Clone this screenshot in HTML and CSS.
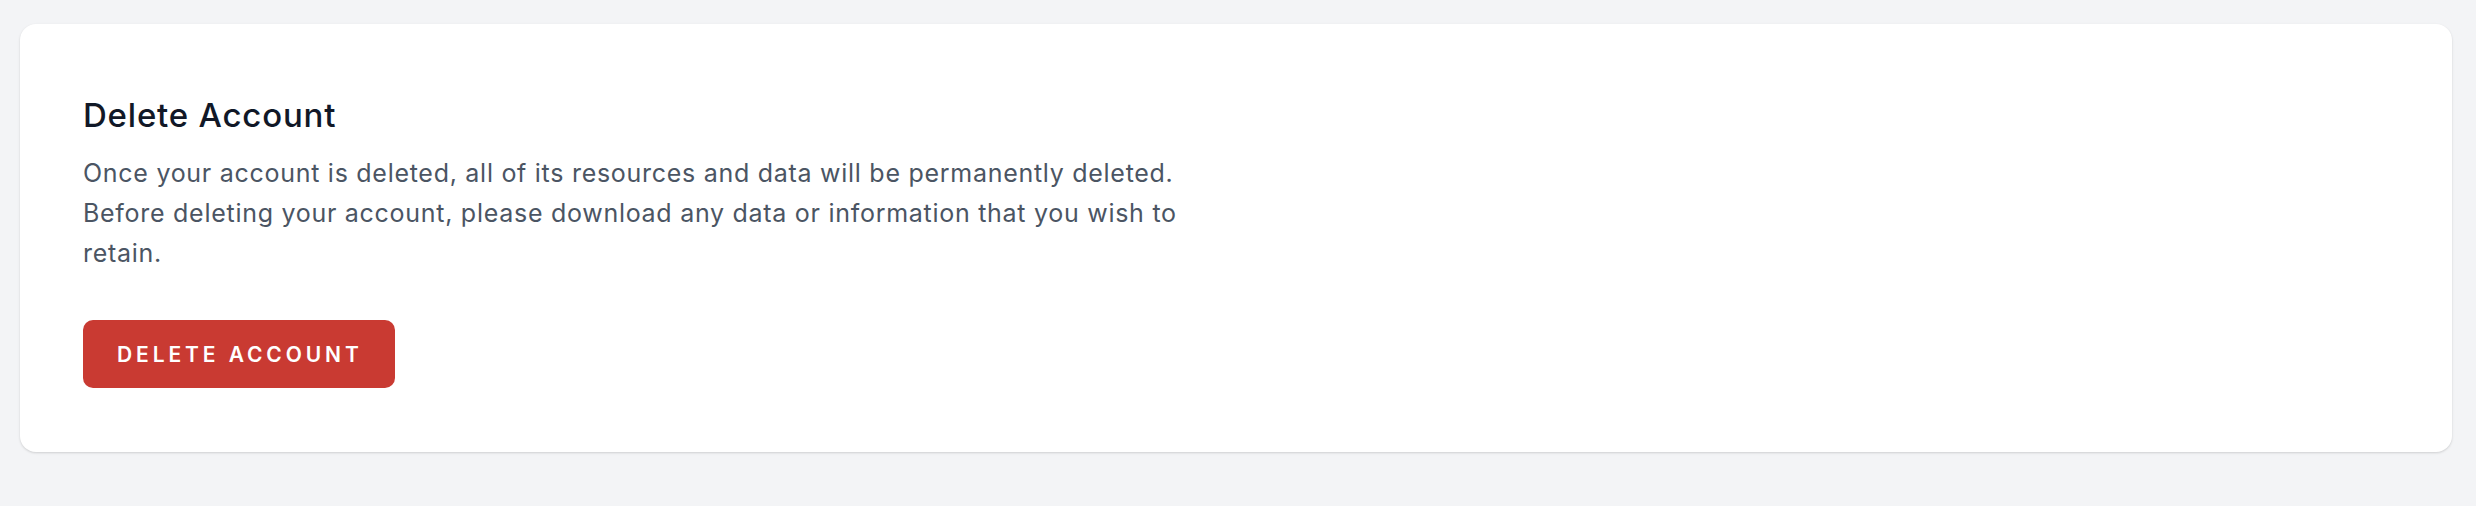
FILE: index.html
```html
<!DOCTYPE html>
<html lang="en">
<head>
<meta charset="utf-8">
<title>Delete Account</title>
<link rel="stylesheet" href="styles.css">
</head>
<body>
<main class="page">
  <section class="card">
    <header class="card-header">
      <h2 class="card-title">Delete Account</h2>
      <p class="card-text">Once your account is deleted, all of its resources and data will be permanently deleted. Before deleting your account, please download any data or information that you wish to retain.</p>
    </header>
    <button class="btn-danger" type="button">Delete Account</button>
  </section>
</main>
</body>
</html>
```

FILE: styles.css
```css
* { box-sizing: border-box; }
html, body { margin: 0; padding: 0; }
body {
  background: #f3f4f6;
  font-family: Inter, "Noto Sans", sans-serif;
  width: 2476px;
  height: 506px;
}
.page {
  padding: 24px 24px 0 20px;
}
.card {
  background: #ffffff;
  border-radius: 16px;
  box-shadow: 0 1px 3px rgba(0,0,0,0.10), 0 1px 2px rgba(0,0,0,0.06);
  height: 428px;
  padding: 69px 63px 0 63px;
  display: flex;
  flex-direction: column;
  align-items: flex-start;
}
.card-header {
  max-width: 1150px;
}
.card-title {
  margin: 0;
  font-size: 33px;
  line-height: 44px;
  font-weight: 500;
  letter-spacing: 0.8px;
  color: #111827;
}
.card-text {
  margin: 16px 0 0 0;
  font-size: 25px;
  line-height: 40px;
  letter-spacing: 0.72px;
  color: #4b5563;
}
.btn-danger {
  margin-top: 47px;
  height: 68px;
  padding: 0 32px 0 34px;
  border: none;
  border-radius: 10px;
  background: #c93a32;
  color: #ffffff;
  font-family: Inter, "Noto Sans", sans-serif;
  font-size: 21px;
  font-weight: 600;
  letter-spacing: 3.9px;
  text-transform: uppercase;
}
```
